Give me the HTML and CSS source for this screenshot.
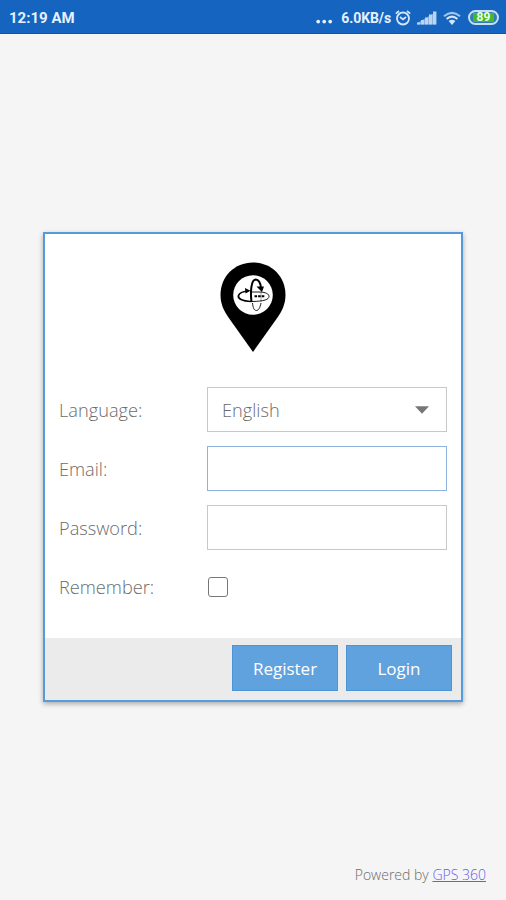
FILE: index.html
```
<!DOCTYPE html>
<html lang="en">
    <head>
        <meta charset="UTF-8" />
        <meta name="viewport" content="width=device-width, initial-scale=1.0" />
        <title>GPS 360</title>
        <link rel="stylesheet" href="styles.css">
    </head>
    <body>
        <header class="status-bar">
            <span class="time">12:19 AM</span>
            <div class="status-icons">
                <svg class="dots" width="17" height="18" viewBox="0 0 17 18" fill="#e6f1ff">
                    <circle cx="2.2" cy="12.6" r="1.9" />
                    <circle cx="8.2" cy="12.6" r="1.9" />
                    <circle cx="14.2" cy="12.6" r="1.9" />
                </svg>
                <span class="speed">6.0KB/s</span>
                <svg class="alarm" width="16" height="18" viewBox="0 0 16 18" fill="none" stroke="#d6e6fa" stroke-width="1.8">
                    <circle cx="8" cy="9.5" r="6" />
                    <path d="M0.8 4.6 L4 2 M15.2 4.6 L12 2 M5 8 L8 10.4 L11 8" />
                </svg>
                <svg class="signal" width="20" height="18" viewBox="0 0 20 18" fill="#bdd4f1">
                    <path d="M0 13.500h3.400v2h-3.400z M4 11h3.400v4.500h-3.400z M8 8.500h3.400v7h-3.400z M12 5.500h3.400v10h-3.400z M16 2.500h3.400v13h-3.400z" />
                    <path d="M0 14 L19 3 V15.500 H0z" opacity="0.5" />
                </svg>
                <svg class="wifi" width="18" height="18" viewBox="0 0 18 18" fill="none" stroke="#d6e6fa" stroke-width="2">
                    <path d="M1 7.300 Q9 0.500 17 7.300" opacity="0.75" />
                    <path d="M3.6 10 Q9 5.200 14.4 10" />
                    <path d="M5.600 12 Q9 9.400 12.400 12 L9 16z" fill="#d6e6fa" stroke="none" />
                </svg>
                <div class="battery"><span>89</span></div>
            </div>
        </header>

        <main class="page">
            <form class="login-panel">
                <div class="panel-body">
                    <svg class="logo" width="66" height="91" viewBox="0 0 66 91">
                        <path d="M33 0.5 C14.5 0.5 0.5 14.5 0.5 33 C0.5 42 4 49 8.5 55.5 L33 90 L57.5 55.5 C62 49 65.5 42 65.5 33 C65.5 14.5 51.5 0.5 33 0.5z" />
                        <circle cx="33" cy="33" r="19.8" fill="#fff" />
                        <g fill="none" stroke="#000">
                            <path d="M31.500 40 C30.300 30 31 18 35.600 17.600 C38.500 17.800 40.500 21 41 26" stroke-width="2" />
                            <path d="M31.500 39.500 C22 39 17.500 36.500 18.500 33.500 C19.500 30.500 23 29.500 28 29" stroke-width="1.700" />
                            <path d="M31 30 H40 C46 30.300 49 32 49 34.500 C49 37.500 44 39.300 32 39.500" stroke-width="0.900" />
                            <path d="M32.500 41 C33 46 34.300 48.500 36.200 48.500 C38.500 48.500 40 46 41 41" stroke-width="0.900" />
                            <path d="M41 30 V40" stroke-width="0.700" opacity="0.5" />
                            <path d="M34.500 34.300 H44.500" stroke-width="2" stroke-dasharray="2.600 1" />
                        </g>
                        <path d="M36.500 24.500 L44 24.500 L42 30z M25 26 L30.500 28.800 L25.500 31.500z" />
                    </svg>
                    <div class="field">
                        <label for="language">Language:</label>
                        <div class="select" id="language" tabindex="0">
                            <span>English</span>
                            <svg width="14" height="8" viewBox="0 0 14 8" fill="#777">
                                <path d="M0 0.3 H14 L7 7.7z" />
                            </svg>
                        </div>
                    </div>
                    <div class="field">
                        <label for="email">Email:</label>
                        <input type="text" id="email" class="text-input active">
                    </div>
                    <div class="field">
                        <label for="password">Password:</label>
                        <input type="password" id="password" class="text-input">
                    </div>
                    <div class="field">
                        <label for="remember">Remember:</label>
                        <input type="checkbox" id="remember" class="checkbox">
                    </div>
                </div>
                <div class="toolbar">
                    <button type="button">Register</button>
                    <button type="button">Login</button>
                </div>
            </form>
        </main>

        <footer class="powered">Powered by <a href="#">GPS 360</a></footer>
    </body>
</html>
```

FILE: styles.css
```
* {
    box-sizing: border-box;
}
body {
    margin: 0;
    height: 900px;
    display: flex;
    flex-direction: column;
    background-color: #f5f5f5;
    font-family: "Open Sans", sans-serif;
    font-weight: 300;
    color: #6c6c6c;
    overflow: hidden;
}
.status-bar {
    height: 34px;
    flex: none;
    padding: 2px 7px 0 9px;
    display: flex;
    align-items: center;
    justify-content: space-between;
    background-color: #1464c0;
    border-bottom: 1px solid #0b55b2;
    color: #e6f1ff;
    font-family: Roboto, sans-serif;
    font-weight: 700;
}
.time {
    font-size: 15px;
}
.status-icons {
    display: flex;
    align-items: center;
}
.speed {
    margin-left: 8px;
    font-size: 14px;
    letter-spacing: -0.1px;
}
.alarm {
    margin-left: 4px;
}
.signal {
    margin-left: 6px;
}
.wifi {
    margin-left: 6px;
}
.battery {
    width: 31px;
    height: 15px;
    margin-left: 7px;
    padding: 1px 3px;
    border: 2px solid #c9def5;
    border-radius: 8px;
    background-color: #2f7cb8;
}
.battery span {
    display: block;
    height: 9px;
    background-color: #42b82c;
    color: #eaffea;
    font-size: 12px;
    line-height: 9px;
    text-align: center;
}
.page {
    flex: 1;
    padding: 198px 43px 0;
}
.login-panel {
    height: 470px;
    display: flex;
    flex-direction: column;
    background-color: #fff;
    border: 2px solid #559bdb;
    box-shadow: 0 2px 5px rgba(0, 0, 0, 0.3);
}
.panel-body {
    flex: 1;
    padding: 28px 14px 0;
    display: flex;
    flex-direction: column;
}
.logo {
    align-self: center;
    margin-bottom: 34px;
}
.field {
    display: flex;
    align-items: center;
    height: 45px;
    margin-bottom: 14px;
    font-size: 18.2px;
}
.field label {
    width: 148px;
}
.select,
.text-input {
    width: 240px;
    height: 45px;
    border: 1px solid #c8c8c8;
    background-color: #fff;
    outline: none;
}
.select {
    display: flex;
    align-items: center;
    justify-content: space-between;
    padding: 0 17px 0 14px;
}
.text-input {
    padding: 0 15px;
    font: inherit;
}
.text-input.active {
    border-color: #8fb1dd;
}
.checkbox {
    appearance: none;
    width: 20px;
    height: 20px;
    margin: 0 0 0 1px;
    border: 1px solid #777;
    border-radius: 3px;
    background-color: #fff;
}
.toolbar {
    height: 62px;
    padding: 7px 9px 9px;
    display: flex;
    justify-content: flex-end;
    gap: 8px;
    background-color: #ebebeb;
}
.toolbar button {
    width: 106px;
    height: 46px;
    padding: 0;
    border: 1px solid #4b96d8;
    background-color: #5fa2dd;
    color: #fff;
    font-family: inherit;
    font-size: 17px;
    font-weight: 400;
}
.powered {
    padding: 0 20px 15px 0;
    text-align: right;
    font-size: 14px;
    line-height: 20px;
}
.powered a {
    color: #6a5be8;
}
```
